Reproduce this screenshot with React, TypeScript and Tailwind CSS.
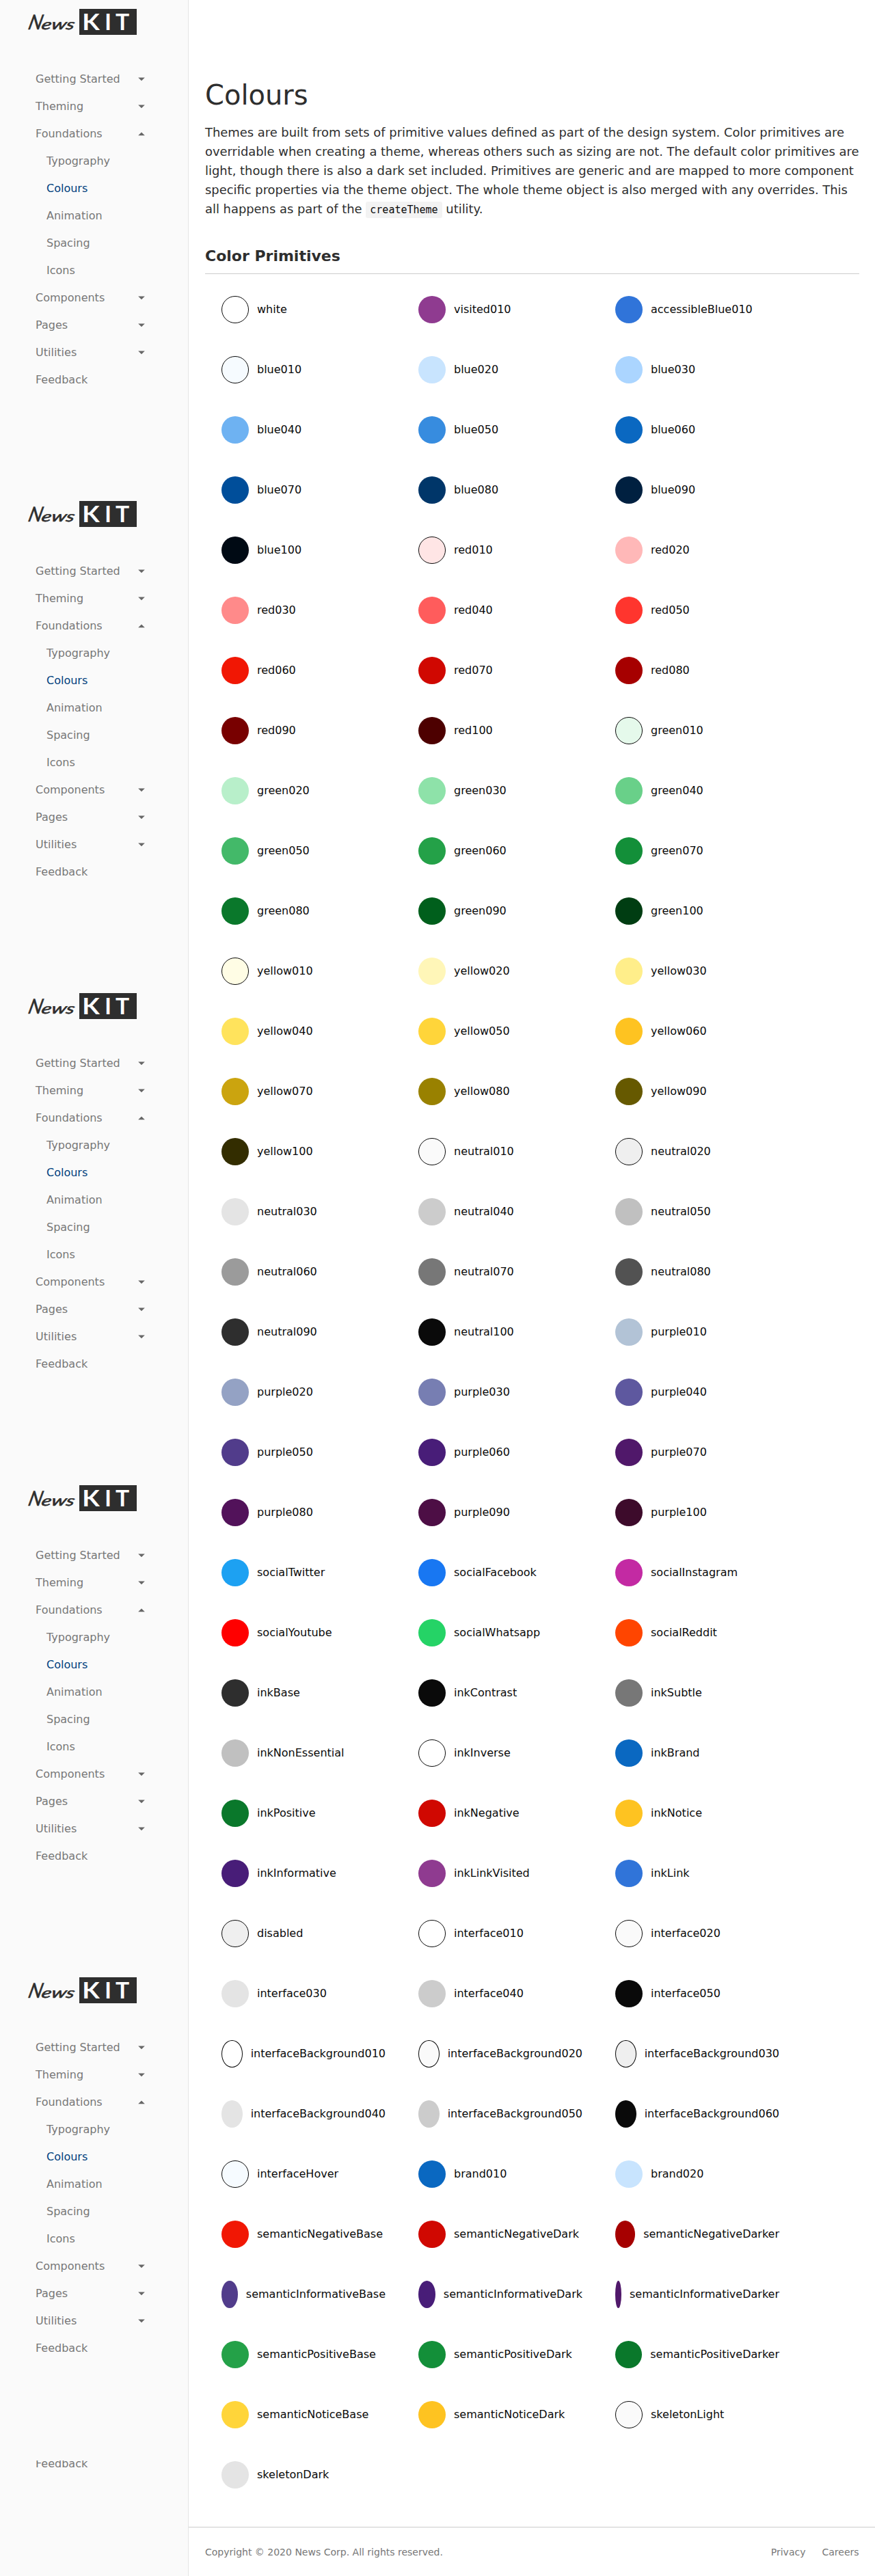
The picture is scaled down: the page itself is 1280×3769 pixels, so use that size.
import React from 'react';

type Swatch = [name: string, color: string, outlined?: boolean];

const swatches: Swatch[] = [
  ['white', '#FFFFFF', true], ['visited010', '#8F3B90'], ['accessibleBlue010', '#3074D9'],
  ['blue010', '#F6FBFF', true], ['blue020', '#C8E4FE'], ['blue030', '#ABD5FF'],
  ['blue040', '#6EB2F2'], ['blue050', '#378CDF'], ['blue060', '#0A68C1'],
  ['blue070', '#004E9A'], ['blue080', '#003669'], ['blue090', '#002040'],
  ['blue100', '#000A14'], ['red010', '#FFE5E5', true], ['red020', '#FFB8B8'],
  ['red030', '#FF8A8A'], ['red040', '#FF5C5C'], ['red050', '#FF352E'],
  ['red060', '#F11704'], ['red070', '#D00801'], ['red080', '#A60000'],
  ['red090', '#780000'], ['red100', '#4D0000'], ['green010', '#E5F9EB', true],
  ['green020', '#B8EFCA'], ['green030', '#8EE2A9'], ['green040', '#69D089'],
  ['green050', '#43B969'], ['green060', '#24A148'], ['green070', '#138F39'],
  ['green080', '#0A782B'], ['green090', '#005F1C'], ['green100', '#003D12'],
  ['yellow010', '#FFFDE5', true], ['yellow020', '#FFF6B8'], ['yellow030', '#FFEE8A'],
  ['yellow040', '#FFE35C'], ['yellow050', '#FFD53A'], ['yellow060', '#FEC321'],
  ['yellow070', '#CBA40F'], ['yellow080', '#998100'], ['yellow090', '#665900'],
  ['yellow100', '#332D00'], ['neutral010', '#FAFAFA', true], ['neutral020', '#EFEFEF', true],
  ['neutral030', '#E4E4E4'], ['neutral040', '#CCCCCC'], ['neutral050', '#C0C0C0'],
  ['neutral060', '#9B9B9B'], ['neutral070', '#777777'], ['neutral080', '#525252'],
  ['neutral090', '#2E2E2E'], ['neutral100', '#0A0A0A'], ['purple010', '#B2C3D6'],
  ['purple020', '#94A2C4'], ['purple030', '#777EB2'], ['purple040', '#5E589F'],
  ['purple050', '#513C8B'], ['purple060', '#481D78'], ['purple070', '#50186A'],
  ['purple080', '#52125A'], ['purple090', '#4D0E45'], ['purple100', '#3D0B2B'],
  ['socialTwitter', '#1DA1F2'], ['socialFacebook', '#1877F2'], ['socialInstagram', '#C32AA3'],
  ['socialYoutube', '#FF0000'], ['socialWhatsapp', '#25D366'], ['socialReddit', '#FF4500'],
  ['inkBase', '#2E2E2E'], ['inkContrast', '#0A0A0A'], ['inkSubtle', '#777777'],
  ['inkNonEssential', '#C0C0C0'], ['inkInverse', '#FFFFFF', true], ['inkBrand', '#0A68C1'],
  ['inkPositive', '#0A782B'], ['inkNegative', '#D00801'], ['inkNotice', '#FEC321'],
  ['inkInformative', '#481D78'], ['inkLinkVisited', '#8F3B90'], ['inkLink', '#3074D9'],
  ['disabled', '#EFEFEF', true], ['interface010', '#FFFFFF', true], ['interface020', '#FAFAFA', true],
  ['interface030', '#E4E4E4'], ['interface040', '#CCCCCC'], ['interface050', '#0A0A0A'],
  ['interfaceBackground010', '#FFFFFF', true], ['interfaceBackground020', '#FAFAFA', true], ['interfaceBackground030', '#EFEFEF', true],
  ['interfaceBackground040', '#E4E4E4'], ['interfaceBackground050', '#CCCCCC'], ['interfaceBackground060', '#0A0A0A'],
  ['interfaceHover', '#F6FBFF', true], ['brand010', '#0A68C1'], ['brand020', '#C8E4FE'],
  ['semanticNegativeBase', '#F11704'], ['semanticNegativeDark', '#D00801'], ['semanticNegativeDarker', '#A60000'],
  ['semanticInformativeBase', '#513C8B'], ['semanticInformativeDark', '#481D78'], ['semanticInformativeDarker', '#50186A'],
  ['semanticPositiveBase', '#24A148'], ['semanticPositiveDark', '#138F39'], ['semanticPositiveDarker', '#0A782B'],
  ['semanticNoticeBase', '#FFD53A'], ['semanticNoticeDark', '#FEC321'], ['skeletonLight', '#FAFAFA', true],
  ['skeletonDark', '#E4E4E4'],
];

type NavItem = { label: string; caret?: 'up' | 'down'; children?: string[] };

const nav: NavItem[] = [
  { label: 'Getting Started', caret: 'down' },
  { label: 'Theming', caret: 'down' },
  { label: 'Foundations', caret: 'up', children: ['Typography', 'Colours', 'Animation', 'Spacing', 'Icons'] },
  { label: 'Components', caret: 'down' },
  { label: 'Pages', caret: 'down' },
  { label: 'Utilities', caret: 'down' },
  { label: 'Feedback' },
];

function Logo() {
  return (
    <svg width="160" height="38" viewBox="0 0 160 38" className="block" aria-label="NewsKit">
      <g transform="translate(1 30) skewX(-14)" fill="#2e2e2e" stroke="#2e2e2e" strokeWidth="0.6" fontFamily="Lato" fontStyle="italic">
        <text x="-1" y="0" fontSize="30" textLength="20" lengthAdjust="spacingAndGlyphs">N</text>
        <text x="18.5" y="-0.3" fontSize="21" textLength="48" lengthAdjust="spacingAndGlyphs">ews</text>
      </g>
      <rect x="76" width="84" height="38" fill="#2e2e2e" />
      <g fontSize="32.5" fontFamily="Lato" fontWeight="700" fill="#fff">
        <text x="80.3" y="30.6" textLength="25.5" lengthAdjust="spacingAndGlyphs">K</text>
        <text x="113.3" y="30.6">I</text>
        <text x="129" y="30.6" textLength="20.2" lengthAdjust="spacingAndGlyphs">T</text>
      </g>
    </svg>
  );
}

function Caret({ dir }: { dir: 'up' | 'down' }) {
  return (
    <svg width="10" height="6" viewBox="0 0 10 6" className="block">
      <path d={dir === 'down' ? 'M0.2 0.5h9.6L5 5.3z' : 'M0.2 5.3h9.6L5 0.5z'} fill="#666" />
    </svg>
  );
}

function NavRow({ item }: { item: NavItem }) {
  return (
    <div className="flex h-10 shrink-0 items-center justify-between pl-[52px] pr-[63px]">
      <span>{item.label}</span>
      {item.caret && <Caret dir={item.caret} />}
    </div>
  );
}

function NavPanel() {
  return (
    <div className="h-[720px] shrink-0 pt-[13px]">
      <div className="pl-10"><Logo /></div>
      <nav className="mt-[45px]">
        {nav.map((item) => (
          <div key={item.label}>
            <NavRow item={item} />
            {item.children?.map((child) => (
              <div key={child} className={`flex h-10 items-center pl-[68px] ${child === 'Colours' ? 'text-[#003f7d]' : ''}`}>
                {child}
              </div>
            ))}
          </div>
        ))}
      </nav>
    </div>
  );
}

export default function App() {
  return (
    <div className="flex h-[3769px] w-[1280px] bg-white font-['DejaVu_Sans',sans-serif]">
      <aside className="flex w-[276px] shrink-0 flex-col border-r border-[#e4e4e4] bg-[#fafafa] text-[16px] leading-6 text-[#777]">
        {[0, 1, 2, 3, 4].map((i) => <NavPanel key={i} />)}
        <div className="h-[169px] overflow-hidden">
          <div className="-mt-[15px]">
            <NavRow item={{ label: 'Feedback' }} />
          </div>
        </div>
      </aside>
      <main className="flex flex-1 flex-col">
        <div className="flex-1 px-6 pt-[115px] text-[#2e2e2e]">
          <h1 className="text-[40px] leading-[48px]">Colours</h1>
          <p className="mt-[17px] whitespace-nowrap text-[17.9px] leading-7">
            Themes are built from sets of primitive values defined as part of the design system. Color primitives are<br />
            overridable when creating a theme, whereas others such as sizing are not. The default color primitives are<br />
            light, though there is also a dark set included. Primitives are generic and are mapped to more component<br />
            specific properties via the theme object. The whole theme object is also merged with any overrides. This<br />
            all happens as part of the{' '}
            <code className="rounded-[3px] bg-[#f3f3f3] px-1.5 py-[3px] font-['DejaVu_Sans_Mono',monospace] text-[15px] leading-none text-[#0a0a0a]">createTheme</code>{' '}
            utility.
          </p>
          <h2 className="mt-[41px] border-b border-[#ccc] pb-[11px] text-[22px] font-bold leading-7">Color Primitives</h2>
          <div className="mt-2 grid grid-cols-[288px_288px_288px]">
            {swatches.map(([name, color, outlined]) => (
              <div key={name} className="flex items-center p-6">
                <div
                  className={`h-10 w-10 rounded-[50%] ${outlined ? 'border border-[#0a0a0a]' : ''}`}
                  style={{ backgroundColor: color }}
                />
                <span className="ml-3 text-[16px] leading-6 text-[#0a0a0a]">{name}</span>
              </div>
            ))}
          </div>
        </div>
        <footer className="flex h-[72px] items-center justify-between border-t border-[#ccc] px-6 text-[14px] leading-5 text-[#777]">
          <span>Copyright © 2020 News Corp. All rights reserved.</span>
          <div className="flex gap-6">
            <span>Privacy</span>
            <span>Careers</span>
          </div>
        </footer>
      </main>
    </div>
  );
}
